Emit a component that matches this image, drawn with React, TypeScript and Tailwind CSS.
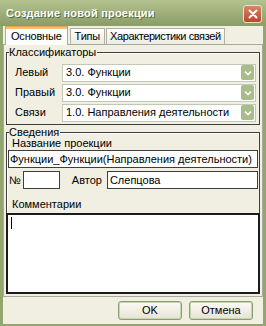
import React from "react"

const font = { fontFamily: '"Liberation Sans", Arial, sans-serif' }

const Combo = ({ value }: { value: string }) => (
  <div className="flex h-[18px] flex-1 items-center border border-[#c3c7b6] bg-white pl-[3px]">
    <span className="flex-1 truncate text-[11px] leading-none text-black">{value}</span>
    <span className="mr-[1px] flex h-[15px] w-[13px] items-center justify-center rounded-[2px] bg-[#a9bd8a]">
      <svg width="8" height="6" viewBox="0 0 8 6">
        <path d="M1 1.5 L4 4.5 L7 1.5" fill="none" stroke="white" strokeWidth="1.6" />
      </svg>
    </span>
  </div>
)

const Group = ({ title, children, className = "" }: { title: string; children: React.ReactNode; className?: string }) => (
  <div className={`relative border border-[#3f3f3f] shadow-[inset_1px_1px_0_#ffffff] ${className}`}>
    <span className="absolute -top-[7px] left-[2px] bg-[#f1efe2] pr-[1px] text-[11px] leading-[12px] text-black">{title}</span>
    {children}
  </div>
)

const Button = ({ label }: { label: string }) => (
  <button className="flex h-[19px] w-[64px] items-center justify-center rounded-[3px] border border-[#8d9d73] bg-gradient-to-b from-[#fbfaf4] to-[#e6e4d6] text-[11px] text-black shadow-[inset_0_0_0_1px_#c6d6a6]">
    {label}
  </button>
)

export default function App() {
  return (
    <div className="flex h-[326px] w-[266px] flex-col bg-[#93a66f]" style={font}>
      {/* title bar */}
      <div className="flex h-[26px] shrink-0 items-center justify-between bg-gradient-to-b from-[#b4c291] via-[#9eb07a] to-[#8a9d66] pl-[6px] pr-[4px]">
        <span className="text-[11px] font-bold tracking-[0.2px] text-white [text-shadow:1px_1px_0_#5c6b40]">
          Создание новой проекции
        </span>
        <span className="mt-[2px] flex h-[18px] w-[19px] items-center justify-center rounded-[3px] border border-[#e9e2d0] bg-gradient-to-b from-[#dc8463] to-[#b8482c]">
          <svg width="10" height="10" viewBox="0 0 10 10">
            <path d="M1.5 1.5 L8.5 8.5 M8.5 1.5 L1.5 8.5" stroke="white" strokeWidth="2" strokeLinecap="round" />
          </svg>
        </span>
      </div>

      <div className="mx-[3px] mb-[2px] flex min-h-0 flex-1 flex-col bg-[#f1efe2]">
        {/* tabs */}
        <div className="flex h-[18px] shrink-0 items-end pl-[2px]">
          <div className="relative z-10 -mb-[1px] flex h-[19px] items-center border border-b-0 border-[#a8ab9c] border-t-[#e5a14f] bg-[#fcfcfa] px-[5px] text-[11px] tracking-[-0.2px] text-black shadow-[inset_0_2px_0_#f2c078]">
            Основные
          </div>
          <div className="ml-[2px] flex h-[16px] items-center border border-b-0 border-[#b0b3a4] bg-gradient-to-b from-[#fefefe] to-[#ecebe4] px-[4px] text-[11px] tracking-[-0.2px] text-black">
            Типы
          </div>
          <div className="ml-[1px] flex h-[16px] items-center border border-b-0 border-[#b0b3a4] bg-gradient-to-b from-[#fefefe] to-[#ecebe4] px-[3px] text-[11px] tracking-[-0.4px] text-black">
            Характеристики связей
          </div>
        </div>

        {/* panel */}
        <div className="flex min-h-0 flex-1 flex-col border border-[#a8ab9c] px-[2px] pt-[7px] pb-[2px]">
          <Group title="Классификаторы" className="flex shrink-0 flex-col gap-[1px] pt-[10px] pb-[2px] pl-[8px] pr-[3px]">
            {[
              ["Левый", "3.0. Функции"],
              ["Правый", "3.0. Функции"],
              ["Связи", "1.0. Направления деятельности"],
            ].map(([l, v]) => (
              <div key={l} className="flex h-[19px] items-center">
                <span className="w-[47px] text-[11px] text-black">{l}</span>
                <Combo value={v} />
              </div>
            ))}
          </Group>

          <Group title="Сведения" className="mt-[7px] flex min-h-0 flex-1 flex-col pt-[4px]">
            <span className="pl-[5px] text-[11px] leading-[12px] text-black">Название проекции</span>
            <div className="mx-[1px] mt-[1px] flex h-[18px] shrink-0 items-center whitespace-nowrap border border-[#3f3f3f] bg-white pl-[1px] text-[11px] text-black">
              Функции_Функции(Направления деятельности)
            </div>
            <div className="mt-[3px] flex h-[18px] shrink-0 items-center pl-[2px] pr-[1px]">
              <span className="text-[11px] text-black">№</span>
              <div className="ml-[2px] h-[18px] w-[37px] border border-[#3f3f3f] bg-white" />
              <span className="ml-[12px] text-[11px] text-black">Автор</span>
              <div className="ml-[5px] flex h-[18px] flex-1 items-center border border-[#3f3f3f] bg-white pl-[2px] text-[11px] text-black">
                Слепцова
              </div>
            </div>
            <span className="mt-[9px] pl-[5px] text-[11px] leading-[12px] text-black">Комментарии</span>
            <div className="-mx-[1px] -mb-[1px] mt-[3px] min-h-0 flex-1 border-2 border-[#1c1c1c] bg-white pl-[3px] pt-[2px]">
              <div className="h-[12px] w-[1px] bg-black" />
            </div>
          </Group>
        </div>

        {/* buttons */}
        <div className="flex h-[27px] shrink-0 items-center justify-end gap-[7px] pr-[10px]">
          <Button label="OK" />
          <Button label="Отмена" />
        </div>
      </div>
    </div>
  )
}
